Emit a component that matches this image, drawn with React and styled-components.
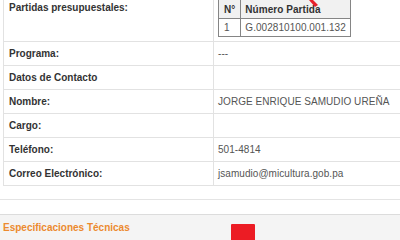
import React from "react";
import styled, { createGlobalStyle } from "styled-components";

const Global = createGlobalStyle`
  html, body {
    margin: 0;
    padding: 0;
    background: #fff;
    overflow: hidden;
  }
  body {
    font-family: "Liberation Sans", Arial, sans-serif;
    font-size: 10px;
    color: #333;
  }
`;

const Page = styled.div`
  position: relative;
  width: 400px;
  height: 240px;
  overflow: hidden;
`;

const Sheet = styled.div`
  margin-top: -6px;
`;

const DetailTable = styled.table`
  margin-left: 3px;
  width: 430px;
  border-collapse: collapse;
  border: 1px solid #e2e2e2;
  table-layout: fixed;
`;

const Row = styled.tr`
  border-bottom: 1px solid #e2e2e2;
`;

const Label = styled.th`
  width: 199px;
  text-align: left;
  vertical-align: top;
  font-weight: bold;
  color: #333;
  padding: 0 5px;
  height: 23px;
  line-height: 23px;
  border-right: 1px solid #e2e2e2;
`;

const Value = styled.td`
  text-align: left;
  vertical-align: top;
  color: #555;
  padding: 0 4px;
  height: 23px;
  line-height: 23px;
  letter-spacing: 0.05px;
  padding-top: ${(p) => (p.$nested ? "4px" : "0")};
  padding-bottom: ${(p) => (p.$nested ? "4px" : "0")};
`;

const TallLabel = styled(Label)`
  padding-top: 1px;
`;

const Partidas = styled.table`
  border-collapse: collapse;
  border: 1px solid #858585;
  line-height: 17px;
`;

const PartidaHead = styled.th`
  border: 1px solid #858585;
  background: #f1f1f1;
  color: #333;
  font-weight: bold;
  text-align: left;
  padding: 0 ${(p) => p.$pad || "5px"};
  height: 18px;
`;

const PartidaCell = styled.td`
  border: 1px solid #858585;
  color: #555;
  padding: 0 ${(p) => p.$pad || "5px"};
  height: 17px;
  width: ${(p) => p.$w || "auto"};
`;

const Divider = styled.div`
  margin-top: 13px;
  border-top: 1px solid #e4e4e4;
  height: 14px;
`;

const PanelHeading = styled.div`
  border-top: 1px solid #dcdcdc;
  background: #f4f4f4;
  height: 40px;
  padding: 7px 3px 0;
  box-sizing: border-box;
  color: #ec8a2f;
  font-weight: bold;
  font-size: 10px;
`;

const Marker = styled.svg`
  position: absolute;
  left: 309px;
  top: 0;
`;

const RedTab = styled.div`
  position: absolute;
  left: 231px;
  top: 224px;
  width: 24px;
  height: 20px;
  background: #ec1c24;
  border-radius: 1px;
`;

const rows = [
  ["Programa:", "---"],
  ["Datos de Contacto", ""],
  ["Nombre:", "JORGE ENRIQUE SAMUDIO UREÑA"],
  ["Cargo:", ""],
  ["Teléfono:", "501-4814"],
  ["Correo Electrónico:", "jsamudio@micultura.gob.pa"],
];

export default function App() {
  return (
    <Page>
      <Global />
      <Sheet>
        <DetailTable>
          <tbody>
            <Row>
              <TallLabel>Partidas presupuestales:</TallLabel>
              <Value $nested>
                <Partidas>
                  <thead>
                    <tr>
                      <PartidaHead>N°</PartidaHead>
                      <PartidaHead $pad="4px">Número Partida</PartidaHead>
                    </tr>
                  </thead>
                  <tbody>
                    <tr>
                      <PartidaCell $w="10px">1</PartidaCell>
                      <PartidaCell $pad="4px">G.002810100.001.132</PartidaCell>
                    </tr>
                  </tbody>
                </Partidas>
              </Value>
            </Row>
            {rows.map(([label, value]) => (
              <Row key={label}>
                <Label>{label}</Label>
                <Value>{value}</Value>
              </Row>
            ))}
          </tbody>
        </DetailTable>
        <Divider />
        <PanelHeading>Especificaciones Técnicas</PanelHeading>
      </Sheet>
      <Marker width="10" height="8" viewBox="0 0 10 8">
        <path d="M0 0 L4 0 L9 5 L6 7 Z" fill="#e8202a" />
      </Marker>
      <RedTab />
    </Page>
  );
}
